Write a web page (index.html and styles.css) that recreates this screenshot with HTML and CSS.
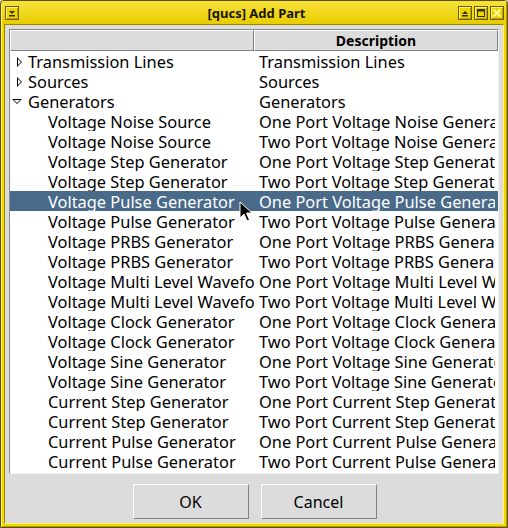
FILE: index.html
```html
<!DOCTYPE html>
<html>
<head>
<meta charset="utf-8">
<link rel="stylesheet" href="styles.css">
</head>
<body>
<div class="window">
  <div class="titlebar">
    <div class="tbtn">
      <svg width="14" height="14" viewBox="0 0 14 14"><path d="M4 5h6l-3 3z" fill="#3a3000"/><rect x="4" y="9" width="6" height="1.5" fill="#3a3000"/></svg>
    </div>
    <div class="title">[qucs] Add Part</div>
    <div class="tbtns">
      <div class="tbtn">
        <svg width="14" height="14" viewBox="0 0 14 14"><path d="M4 8h6l-3-3z" fill="#3a3000"/><rect x="4" y="9" width="6" height="1.5" fill="#3a3000"/></svg>
      </div>
      <div class="tbtn">
        <svg width="14" height="14" viewBox="0 0 14 14"><rect x="3.5" y="3.5" width="7" height="7" fill="none" stroke="#3a3000"/><rect x="3.5" y="3.5" width="7" height="2" fill="#3a3000"/></svg>
      </div>
      <div class="tbtn">
        <svg width="14" height="14" viewBox="0 0 14 14"><path d="M3.5 3.5l7 7M10.5 3.5l-7 7" stroke="#fff6a0" stroke-width="2"/></svg>
      </div>
    </div>
  </div>
  <div class="client">
    <div class="list">
      <div class="header">
        <div class="hcell c1"></div>
        <div class="hcell c2">Description</div>
      </div>
      <div class="rows">
        <div class="row"><div class="c1 lvl0"><span class="arrow closed"></span>Transmission Lines</div><div class="c2">Transmission Lines</div></div>
        <div class="row"><div class="c1 lvl0"><span class="arrow closed"></span>Sources</div><div class="c2">Sources</div></div>
        <div class="row"><div class="c1 lvl0"><span class="arrow open"></span>Generators</div><div class="c2">Generators</div></div>
        <div class="row"><div class="c1 lvl1">Voltage Noise Source</div><div class="c2">One Port Voltage Noise Generator</div></div>
        <div class="row"><div class="c1 lvl1">Voltage Noise Source</div><div class="c2">Two Port Voltage Noise Generator</div></div>
        <div class="row"><div class="c1 lvl1">Voltage Step Generator</div><div class="c2">One Port Voltage Step Generator</div></div>
        <div class="row"><div class="c1 lvl1">Voltage Step Generator</div><div class="c2">Two Port Voltage Step Generator</div></div>
        <div class="row sel"><div class="c1 lvl1">Voltage Pulse Generator</div><div class="c2">One Port Voltage Pulse Generator</div></div>
        <div class="row"><div class="c1 lvl1">Voltage Pulse Generator</div><div class="c2">Two Port Voltage Pulse Generator</div></div>
        <div class="row"><div class="c1 lvl1">Voltage PRBS Generator</div><div class="c2">One Port Voltage PRBS Generator</div></div>
        <div class="row"><div class="c1 lvl1">Voltage PRBS Generator</div><div class="c2">Two Port Voltage PRBS Generator</div></div>
        <div class="row"><div class="c1 lvl1">Voltage Multi Level Waveform</div><div class="c2">One Port Voltage Multi Level Waveform</div></div>
        <div class="row"><div class="c1 lvl1">Voltage Multi Level Waveform</div><div class="c2">Two Port Voltage Multi Level Waveform</div></div>
        <div class="row"><div class="c1 lvl1">Voltage Clock Generator</div><div class="c2">One Port Voltage Clock Generator</div></div>
        <div class="row"><div class="c1 lvl1">Voltage Clock Generator</div><div class="c2">Two Port Voltage Clock Generator</div></div>
        <div class="row"><div class="c1 lvl1">Voltage Sine Generator</div><div class="c2">One Port Voltage Sine Generator</div></div>
        <div class="row"><div class="c1 lvl1">Voltage Sine Generator</div><div class="c2">Two Port Voltage Sine Generator</div></div>
        <div class="row"><div class="c1 lvl1">Current Step Generator</div><div class="c2">One Port Current Step Generator</div></div>
        <div class="row"><div class="c1 lvl1">Current Step Generator</div><div class="c2">Two Port Current Step Generator</div></div>
        <div class="row"><div class="c1 lvl1">Current Pulse Generator</div><div class="c2">One Port Current Pulse Generator</div></div>
        <div class="row"><div class="c1 lvl1">Current Pulse Generator</div><div class="c2">Two Port Current Pulse Generator</div></div>
      </div>
      <svg class="cursor" width="14" height="22" viewBox="0 0 14 22"><path d="M1 1v16l4-4 3 7 2.5-1-3-7h5.5z" fill="#000" stroke="#fff" stroke-width="1"/></svg>
    </div>
    <div class="buttons">
      <div class="btn">OK</div>
      <div class="btn">Cancel</div>
    </div>
  </div>
</div>
</body>
</html>
```
FILE: styles.css
```css
html, body {
  margin: 0;
  padding: 0;
  background: #d0d0d0;
}
body {
  font-family: "Noto Sans", "Open Sans", sans-serif;
  color: #000;
}
.window {
  width: 508px;
  height: 528px;
  box-sizing: border-box;
  border: 1px solid #5e5000;
  border-radius: 4px 4px 0 0;
  background: #f0d800;
  padding: 0 3px 3px 3px;
  display: flex;
  flex-direction: column;
  box-shadow: inset 1px 1px 0 #fff37a, inset -1px -1px 0 #b29c00;
}
.titlebar {
  height: 23px;
  display: flex;
  align-items: center;
  background: linear-gradient(#f7e23a, #e8cc00);
  margin: 0 -2px;
  padding: 0 2px 0 3px;
}
.title {
  flex: 1;
  text-align: center;
  font-weight: bold;
  font-size: 13px;
  color: #1a1600;
  padding-left: 36px;
}
.tbtns {
  display: flex;
  gap: 2px;
}
.tbtn {
  width: 14px;
  height: 14px;
  box-sizing: border-box;
  border: 1px solid #6b5d00;
  background: #ecd400;
  box-shadow: inset 1px 1px 0 #fff07a, inset -1px -1px 0 #b9a200;
  display: flex;
}
.tbtn svg {
  margin: -1px;
}
.client {
  flex: 1;
  background: #dcdcdc;
  border: 1px solid #9b8600;
  border-right-color: #fff37a;
  border-bottom-color: #fff37a;
  padding: 4px 4px 0 4px;
  display: flex;
  flex-direction: column;
}
.list {
  position: relative;
  height: 443px;
  background: #fff;
  border: 1px solid #8a8a8a;
  border-right-color: #f4f4f4;
  border-bottom-color: #f4f4f4;
  overflow: hidden;
  font-size: 16.4px;
}
.header {
  display: flex;
  height: 21px;
  background: #dcdcdc;
}
.hcell {
  box-sizing: border-box;
  border: 1px solid #ffffff;
  border-right-color: #808080;
  border-bottom-color: #808080;
  font-weight: bold;
  font-size: 14px;
  text-align: center;
  line-height: 19px;
}
.c1 {
  width: 244px;
  flex: none;
}
.c2 {
  flex: 1;
  min-width: 0;
}
.rows {
  display: flex;
  flex-direction: column;
}
.row {
  display: flex;
  height: 20px;
  line-height: 20px;
  white-space: nowrap;
}
.row .c1, .row .c2 {
  overflow: hidden;
  padding-top: 1px;
  height: 19px;
}
.row .c2 {
  padding-left: 5px;
  margin-right: 3px;
}
.lvl0 {
  padding-left: 7px;
  box-sizing: content-box;
  display: flex;
  align-items: center;
}
.row .lvl0 {
  width: 237px;
}
.row .lvl1 {
  padding-left: 38px;
  width: 206px;
}
.arrow {
  width: 11px;
  height: 12px;
  flex: none;
  position: relative;
}
.arrow.closed::before {
  content: "";
  position: absolute;
  left: 0;
  top: 1px;
  width: 0;
  height: 0;
  border-top: 5px solid transparent;
  border-bottom: 5px solid transparent;
  border-left: 5px solid #000;
}
.arrow.closed::after {
  content: "";
  position: absolute;
  left: 1px;
  top: 3px;
  width: 0;
  height: 0;
  border-top: 3px solid transparent;
  border-bottom: 3px solid transparent;
  border-left: 3px solid #fff;
}
.arrow.open {
  margin-left: -5px;
  width: 16px;
}
.arrow.open::before {
  content: "";
  position: absolute;
  left: 0;
  top: 3px;
  width: 0;
  height: 0;
  border-left: 5px solid transparent;
  border-right: 5px solid transparent;
  border-top: 5px solid #000;
}
.arrow.open::after {
  content: "";
  position: absolute;
  left: 2px;
  top: 4px;
  width: 0;
  height: 0;
  border-left: 3px solid transparent;
  border-right: 3px solid transparent;
  border-top: 3px solid #fff;
}
.row.sel {
  background: #4a6a8a;
  color: #fff;
}
.cursor {
  position: absolute;
  left: 229px;
  top: 171px;
}
.buttons {
  display: flex;
  justify-content: center;
  gap: 12px;
  padding-top: 10px;
  padding-left: 1px;
}
.btn {
  width: 116px;
  height: 35px;
  box-sizing: border-box;
  border: 1px solid #ffffff;
  border-right-color: #808080;
  border-bottom-color: #808080;
  background: #dcdcdc;
  font-size: 16px;
  display: flex;
  align-items: center;
  justify-content: center;
}
```
